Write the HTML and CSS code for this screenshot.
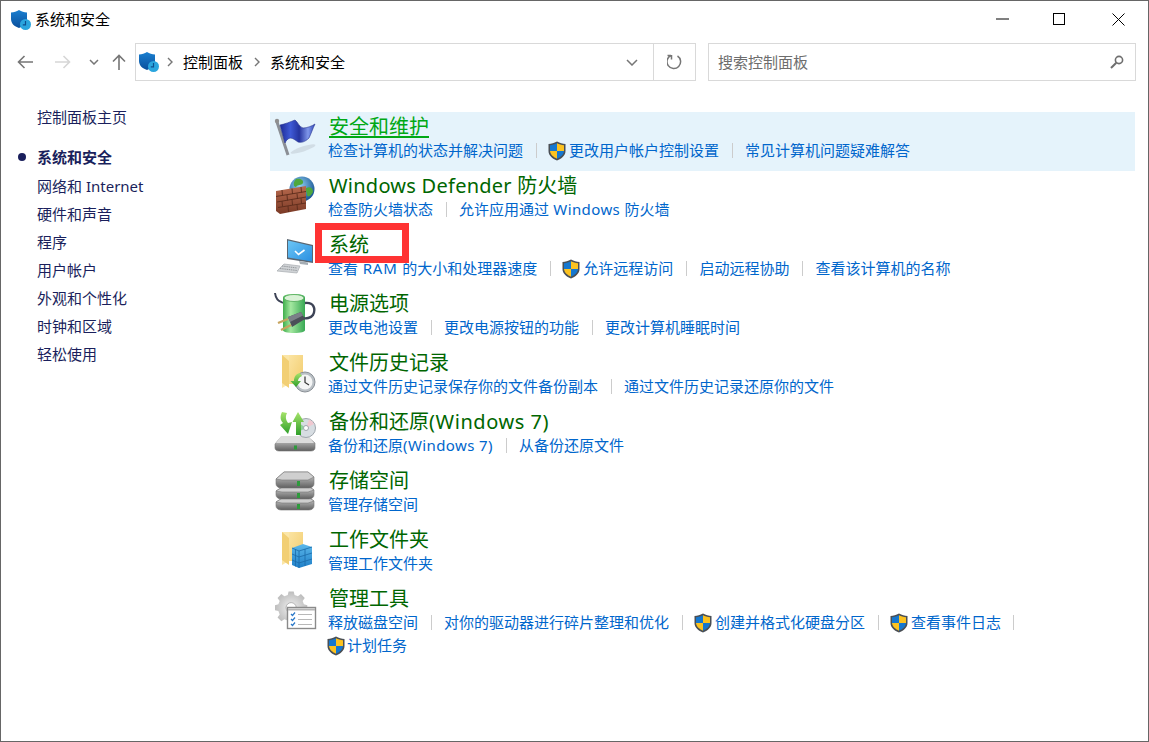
FILE: index.html
```html
<!DOCTYPE html>
<html lang="zh-CN">
<head>
<meta charset="utf-8">
<title>系统和安全</title>
<link rel="stylesheet" href="styles.css">
</head>
<body>
<svg class="defs" width="0" height="0" aria-hidden="true">
  <defs>
    <linearGradient id="gShieldBlue" x1="0" y1="0" x2="0" y2="1"><stop offset="0" stop-color="#1a7fd0"/><stop offset="1" stop-color="#0a4f9c"/></linearGradient>
    <linearGradient id="gFlag" x1="0" y1="0" x2="1" y2="0"><stop offset="0" stop-color="#1c2a96"/><stop offset=".3" stop-color="#3f5ad6"/><stop offset=".55" stop-color="#25349f"/><stop offset=".8" stop-color="#7f97ea"/><stop offset="1" stop-color="#3048b8"/></linearGradient>
    <linearGradient id="gBrick" x1="0" y1="0" x2="0" y2="1"><stop offset="0" stop-color="#b96a4e"/><stop offset="1" stop-color="#7a3a26"/></linearGradient>
    <radialGradient id="gGlobe" cx=".4" cy=".35" r=".7"><stop offset="0" stop-color="#8fd0f5"/><stop offset="1" stop-color="#14508f"/></radialGradient>
    <linearGradient id="gScreen" x1="0" y1="0" x2="1" y2="1"><stop offset="0" stop-color="#6cc6f6"/><stop offset="1" stop-color="#2a8fe0"/></linearGradient>
    <linearGradient id="gBatt" x1="0" y1="0" x2="1" y2="0"><stop offset="0" stop-color="#3fae4c"/><stop offset=".35" stop-color="#a4e8a0"/><stop offset="1" stop-color="#38a854"/></linearGradient>
    <linearGradient id="gFolder" x1="0" y1="0" x2="1" y2="1"><stop offset="0" stop-color="#fbe4a2"/><stop offset="1" stop-color="#f2cc6e"/></linearGradient>
    <linearGradient id="gDrive" x1="0" y1="0" x2="0" y2="1"><stop offset="0" stop-color="#d8d8d8"/><stop offset="1" stop-color="#5f5f5f"/></linearGradient>
    <linearGradient id="gArrow" x1="0" y1="0" x2="0" y2="1"><stop offset="0" stop-color="#a6e36a"/><stop offset="1" stop-color="#2f9f2a"/></linearGradient>
    <linearGradient id="gCube" x1="0" y1="0" x2="0" y2="1"><stop offset="0" stop-color="#5cb8ea"/><stop offset="1" stop-color="#1f7fc8"/></linearGradient>
    <radialGradient id="gGear" cx=".5" cy=".5" r=".6"><stop offset="0" stop-color="#f0f0f0"/><stop offset="1" stop-color="#b4b4b4"/></radialGradient>
    <symbol id="uac" viewBox="0 0 18 20">
      <path d="M9 .5 C12 2 14.5 2.8 17.5 3 V10 C17.5 14.5 13.5 17.8 9 19.5 C4.500 17.800 .5 14.500 .5 10 V3 C3.500 2.800 6 2 9 .5Z" fill="#4a4f55"/>
      <path d="M9 2.200 V10 H2 V4.300 C4.600 4 6.800 3.300 9 2.200Z" fill="#1577cf"/>
      <path d="M9 2.200 C11.200 3.300 13.400 4 16 4.300 V10 H9Z" fill="#fcc21f"/>
      <path d="M2 10 H9 V17.700 C5.600 16.200 2.300 13.800 2 10Z" fill="#fcc21f"/>
      <path d="M9 10 H16 C15.700 13.800 12.400 16.200 9 17.700Z" fill="#1577cf"/>
    </symbol>
    <symbol id="sec" viewBox="0 0 20 20">
      <path d="M8 0 C10.500 1.600 13 2.400 16 2.600 V9 C16 13.500 12.500 16.500 8 18 C3.500 16.500 0 13.500 0 9 V2.600 C3 2.400 5.500 1.600 8 0Z" fill="url(#gShieldBlue)"/>
      <circle cx="14.500" cy="14.500" r="5.500" fill="#2aa5de"/>
      <path d="M14.500 11 V14.800 H11.800" fill="none" stroke="#0d4f8f" stroke-width="1.200"/>
    </symbol>
  </defs>
</svg>
<div class="window">
  <header class="titlebar">
    <svg class="title-icon"><use href="#sec"/></svg>
    <span class="title-text">系统和安全</span>
    <div class="caption">
      <svg class="cap-btn" viewBox="0 0 13 13"><path d="M0 6H13" stroke="#000" fill="none"/></svg>
      <svg class="cap-btn cap-max" viewBox="0 0 13 13"><rect x=".5" y=".5" width="11" height="11" stroke="#000" fill="none"/></svg>
      <svg class="cap-btn" viewBox="0 0 13 13"><path d="M.5 .5 12.500 12.500M12.500 .5 .5 12.500" stroke="#000" fill="none"/></svg>
    </div>
  </header>
  <div class="toolbar">
    <nav class="navs">
      <svg class="nav nav-back" viewBox="0 0 16 14"><path d="M16 7H1.500M7.500 1 1.500 7l6 6" fill="none" stroke="#767676" stroke-width="1.600"/></svg>
      <svg class="nav nav-fwd" viewBox="0 0 16 14"><path d="M0 7H14.500M8.500 1l6 6-6 6" fill="none" stroke="#d6d6d6" stroke-width="1.600"/></svg>
      <svg class="nav nav-drop" viewBox="0 0 10 6"><path d="M1 1l4 4 4-4" fill="none" stroke="#767676" stroke-width="1.500"/></svg>
      <svg class="nav nav-up" viewBox="0 0 14 16"><path d="M7 16V1.500M1 7.500l6-6 6 6" fill="none" stroke="#767676" stroke-width="1.600"/></svg>
    </nav>
    <div class="address">
      <svg class="addr-icon"><use href="#sec"/></svg>
      <svg class="crumb-sep" viewBox="0 0 6 10"><path d="M1 1l4 4-4 4" fill="none" stroke="#767676" stroke-width="1.400"/></svg>
      <span class="crumb">控制面板</span>
      <svg class="crumb-sep" viewBox="0 0 6 10"><path d="M1 1l4 4-4 4" fill="none" stroke="#767676" stroke-width="1.400"/></svg>
      <span class="crumb">系统和安全</span>
      <svg class="addr-drop" viewBox="0 0 12 7"><path d="M1 1l5 5 5-5" fill="none" stroke="#767676" stroke-width="1.500"/></svg>
      <div class="addr-refresh">
        <svg class="refresh" viewBox="0 0 16 16"><path d="M4 1.500 A6.800 6.800 0 1 0 10.500 2 M4.500 1 V5.500 M4 1.500 H0.500" fill="none" stroke="#767676" stroke-width="1.500"/></svg>
      </div>
    </div>
    <div class="search">
      <span class="search-text">搜索控制面板</span>
      <svg class="search-icon" viewBox="0 0 14 14"><circle cx="9" cy="5" r="3.600" fill="none" stroke="#6e6e6e" stroke-width="1.600"/><path d="M6.300 7.700 1 13" stroke="#6e6e6e" stroke-width="2"/></svg>
    </div>
  </div>
  <div class="main">
    <aside class="side">
      <a class="side-home">控制面板主页</a>
      <ul class="side-list">
        <li class="side-item is-current">系统和安全</li>
        <li class="side-item">网络和 Internet</li>
        <li class="side-item">硬件和声音</li>
        <li class="side-item">程序</li>
        <li class="side-item">用户帐户</li>
        <li class="side-item">外观和个性化</li>
        <li class="side-item">时钟和区域</li>
        <li class="side-item">轻松使用</li>
      </ul>
    </aside>
    <section class="content">
      <article class="row is-hover">
        <svg class="row-icon" viewBox="0 0 48 48">
          <ellipse cx="31" cy="35" rx="13" ry="2.500" fill="#c9d3dc" opacity=".7" transform="rotate(-18 31 35)"/>
          <path d="M5 8 16 41" stroke="#8b8f95" stroke-width="3"/>
          <circle cx="5" cy="7" r="2.200" fill="#8f8f8f"/>
          <path d="M8 11 C13 10 18 8 23 6 C26 8 27 13 31 14 C35 14 40 12 43 10 C41 14 39 20 37 24 C33 28 29 29 26 28 C23 26 21 24 18 24 C15 25 14 27 13 29Z" fill="url(#gFlag)" stroke="#26338f" stroke-width=".6"/>
        </svg>
        <div class="row-body">
          <h2 class="row-title title-hover">安全和维护</h2>
          <div class="links">
            <a class="link">检查计算机的状态并解决问题</a>
            <a class="link sep has-uac"><svg class="uac"><use href="#uac"/></svg>更改用户帐户控制设置</a>
            <a class="link sep">常见计算机问题疑难解答</a>
          </div>
        </div>
      </article>
      <article class="row">
        <svg class="row-icon" viewBox="0 0 48 48">
          <circle cx="30" cy="16" r="12.500" fill="url(#gGlobe)"/>
          <path d="M24 6 C28 5 32 7 31 10 C29 13 26 11 24 14 C21 14 21 9 24 6Z M34 15 C38 13 41 15 41 19 C39 23 36 25 35 22 C35 19 33 18 34 15Z" fill="#4fa83c"/>
          <path d="M4 18 34 13 34 36 8 41 4 38Z" fill="url(#gBrick)"/>
          <path d="M4 23.500 34 18.500M5 29 34 24M6 34.500 34 30M10 17 10.500 22.500M20 15.500 20.500 21M29 14 29.500 19.500M15 22 15.500 27.500M25 20.500 25.500 26M10 28 10.500 33.500M20 26.500 20.500 32M29 25 29.500 30.500M16 33 16.500 39M25 31.500 25.500 37" stroke="#5b2b1b" stroke-width=".9" fill="none"/>
        </svg>
        <div class="row-body">
          <h2 class="row-title"><span class="lat-title">Windows Defender </span>防火墙</h2>
          <div class="links">
            <a class="link">检查防火墙状态</a>
            <a class="link sep">允许应用通过<span class="lat"> Windows </span>防火墙</a>
          </div>
        </div>
      </article>
      <article class="row">
        <svg class="row-icon" viewBox="0 0 48 48">
          <path d="M15 7 41 13V31L15 27Z" fill="#5a6570"/>
          <path d="M16 8.500 40 14V29.500L16 25.500Z" fill="url(#gScreen)"/>
          <path d="M23 19l3.500 3.500 6-4.500" fill="none" stroke="#fff" stroke-width="1.600"/>
          <path d="M27 29 36 30.500V33L28 32Z" fill="#a5adb4"/>
          <path d="M12 32 28 34 25 41 5 39Z" fill="#d0d3d6" stroke="#a8acb0" stroke-width=".7"/>
          <path d="M10 34 25 36M8 36.500 25 38.500" stroke="#8f9397" stroke-width=".9" stroke-dasharray="1.500 .7"/>
        </svg>
        <div class="row-body">
          <h2 class="row-title">系统</h2>
          <div class="links">
            <a class="link">查看<span class="lat-wide"> RAM </span>的大小和处理器速度</a>
            <a class="link sep has-uac"><svg class="uac"><use href="#uac"/></svg>允许远程访问</a>
            <a class="link sep">启动远程协助</a>
            <a class="link sep">查看该计算机的名称</a>
          </div>
        </div>
      </article>
      <article class="row">
        <svg class="row-icon" viewBox="0 0 48 48">
          <path d="M3 2 C4 10 8 10 11 12" fill="none" stroke="#3d4356" stroke-width="2"/>
          <path d="M11 7 C11 4 15 3 22 3 C29 3 33 4 33 7 V39 C33 41 29 42 22 42 C15 42 11 41 11 39Z" fill="url(#gBatt)"/>
          <ellipse cx="22" cy="7" rx="10" ry="3.500" fill="#d9f2d6" stroke="#4faa55" stroke-width=".8"/>
          <path d="M33 12 C42 11 44 18 41 24 C39 27 34 28 30 27" fill="none" stroke="#3d4356" stroke-width="2.400"/>
          <path d="M16 26 29 21 33 28 20 36Z" fill="#4b5058"/>
          <path d="M16 26 29 21 31 24.500 18 31Z" fill="#7b8088"/>
          <path d="M16 28 6 32M19 34 9 39" stroke="#c7a45e" stroke-width="2.400"/>
        </svg>
        <div class="row-body">
          <h2 class="row-title">电源选项</h2>
          <div class="links">
            <a class="link">更改电池设置</a>
            <a class="link sep">更改电源按钮的功能</a>
            <a class="link sep">更改计算机睡眠时间</a>
          </div>
        </div>
      </article>
      <article class="row">
        <svg class="row-icon" viewBox="0 0 48 48">
          <path d="M10 5H31V34H17L10 38Z" fill="#fbe6a8"/>
          <path d="M17 5H31V34H17Z" fill="url(#gFolder)"/>
          <path d="M10 5 17 11V38L10 33Z" fill="#f2cf74"/>
          <circle cx="33" cy="32" r="10" fill="#b9bfc4" stroke="#8a9096"/>
          <circle cx="33" cy="32" r="7.500" fill="#f4f5f5"/>
          <path d="M33 26.500V32.500L37 35" fill="none" stroke="#333" stroke-width="1.200"/>
          <path d="M28 23 C23 24 22 28 22 31 H18.500 L24 37 L29 31 H26 C26 29 27 27 30 26Z" fill="url(#gArrow)"/>
        </svg>
        <div class="row-body">
          <h2 class="row-title">文件历史记录</h2>
          <div class="links">
            <a class="link">通过文件历史记录保存你的文件备份副本</a>
            <a class="link sep">通过文件历史记录还原你的文件</a>
          </div>
        </div>
      </article>
      <article class="row">
        <svg class="row-icon" viewBox="0 0 48 48">
          <path d="M9 28 H36 L43 34 V39 C43 41 41 42 39 42 H7 C5 42 3 41 3 39 V35Z" fill="url(#gDrive)" stroke="#777" stroke-width=".6"/>
          <path d="M9 27 H36 L42 34 H4Z" fill="#dcdcdc"/>
          <rect x="22" y="36.500" width="3" height="4" fill="#2e9a3c"/>
          <circle cx="34" cy="19" r="9.500" fill="#d7dde2" stroke="#9ea5ac"/>
          <path d="M34 19 L27 14 A9 9 0 0 0 26 23Z" fill="#8fd09a"/>
          <path d="M34 19 L42 15 A9 9 0 0 0 37 10.500Z" fill="#f0c8d0"/>
          <circle cx="34" cy="19" r="2.500" fill="#fff" stroke="#9ea5ac"/>
          <path d="M10 3 C8 7 8 11 11 14 L8 16 L16 25 L20 13 L16 14 C14 11 13 8 15 4Z" fill="url(#gArrow)"/>
          <path d="M24 26 V13 H20.500 L26 3 L32 13 H29 V26Z" fill="url(#gArrow)"/>
        </svg>
        <div class="row-body">
          <h2 class="row-title">备份和还原<span class="lat-title-wide">(Windows 7)</span></h2>
          <div class="links">
            <a class="link">备份和还原<span class="lat">(Windows 7)</span></a>
            <a class="link sep">从备份还原文件</a>
          </div>
        </div>
      </article>
      <article class="row">
        <svg class="row-icon" viewBox="0 0 48 48">
          <g stroke="#777" stroke-width=".6"><path d="M4 34 12 29H36L42 33V38C42 40 40 42 37 42H9C6 42 4 40 4 38Z" fill="url(#gDrive)"/><path d="M4 34 12 29H36L42 33 36 35H10Z" fill="#cfcfcf"/></g><rect x="25" y="36" width="3" height="5" fill="#2e9a3c"/>
          <g stroke="#777" stroke-width=".6"><path d="M4 23 12 18H36L42 22V27C42 29 40 31 37 31H9C6 31 4 29 4 27Z" fill="url(#gDrive)"/><path d="M4 23 12 18H36L42 22 36 24H10Z" fill="#cfcfcf"/></g><rect x="25" y="25" width="3" height="5" fill="#2e9a3c"/>
          <g stroke="#777" stroke-width=".6"><path d="M4 11 12 4H36L42 9V16C42 18 40 20 37 20H9C6 20 4 18 4 16Z" fill="url(#gDrive)"/><path d="M4 11 12 4H36L42 9 36 12H10Z" fill="#cfcfcf"/></g><rect x="25" y="13" width="3" height="5" fill="#2e9a3c"/>
        </svg>
        <div class="row-body">
          <h2 class="row-title">存储空间</h2>
          <div class="links">
            <a class="link">管理存储空间</a>
          </div>
        </div>
      </article>
      <article class="row">
        <svg class="row-icon" viewBox="0 0 48 48">
          <path d="M10 5H31V34H17L10 38Z" fill="#fbe6a8"/>
          <path d="M17 5H31V34H17Z" fill="url(#gFolder)"/>
          <path d="M10 5 17 11V38L10 33Z" fill="#f2cf74"/>
          <path d="M20 21 31 17 40 20V37L27 41 20 38Z" fill="url(#gCube)"/>
          <path d="M27 24V41M20 21 27 24 40 20M20 27 27 30 40 26M20 33 27 36 40 32M33 22V39M23.500 22.500V39.500" fill="none" stroke="#1a6aa8" stroke-width=".8"/>
        </svg>
        <div class="row-body">
          <h2 class="row-title">工作文件夹</h2>
          <div class="links">
            <a class="link">管理工作文件夹</a>
          </div>
        </div>
      </article>
      <article class="row">
        <svg class="row-icon" viewBox="0 0 48 48">
          <g transform="translate(3 3) scale(.85)">
            <path d="M16 3h6l1 4 4 1.500 3.500-2.500 4.500 4.500-2.500 3.500 1.500 4 4 1v6l-4 1-1.500 4 2.500 3.500-4.500 4.500-3.500-2.500-4 1.500-1 4h-6l-1-4-4-1.500-3.500 2.500-4.500-4.500 2.500-3.500-1.500-4-4-1v-6l4-1 1.500-4-2.500-3.500 4.500-4.500 3.500 2.500 4-1.500Z" fill="url(#gGear)"/>
            <circle cx="19" cy="22" r="6" fill="#fff" stroke="#a6a6a6"/>
          </g>
          <rect x="15.500" y="21.500" width="28" height="21" fill="#fff" stroke="#8a8a8a" stroke-width="1.400"/>
          <path d="M16 23.500H43" stroke="#b5b5b5" stroke-width="2"/>
          <path d="M19 28l1.500 1.500 2.500-3M19 33l1.500 1.500 2.500-3M19 38l1.500 1.500 2.500-3" fill="none" stroke="#2a78c8" stroke-width="1.200"/>
          <path d="M26 28.500H40M26 33.500H40M26 38.500H40" stroke="#b8b8b8"/>
        </svg>
        <div class="row-body">
          <h2 class="row-title">管理工具</h2>
          <div class="links links-narrow">
            <a class="link">释放磁盘空间</a>
            <a class="link sep">对你的驱动器进行碎片整理和优化</a>
            <a class="link sep has-uac"><svg class="uac"><use href="#uac"/></svg>创建并格式化硬盘分区</a>
            <a class="link sep has-uac sep-after"><svg class="uac"><use href="#uac"/></svg>查看事件日志</a>
            <a class="link link-wrapped"><svg class="uac"><use href="#uac"/></svg>计划任务</a>
          </div>
        </div>
      </article>
      <div class="redbox"></div>
    </section>
  </div>
</div>
</body>
</html>
```

FILE: styles.css
```css
* { box-sizing: border-box; }
html, body { margin: 0; padding: 0; }
body {
  width: 1149px;
  height: 742px;
  overflow: hidden;
  background: #fff;
  font-family: "Noto Sans", "Noto Sans CJK SC", sans-serif;
  font-size: 15px;
  color: #000;
}
.defs { display: block; width: 0; height: 0; }
.window {
  width: 1149px;
  height: 742px;
  border: 1px solid #666;
  background: #fff;
  display: flex;
  flex-direction: column;
}
.titlebar {
  display: flex;
  align-items: center;
  height: 38px;
  flex: none;
  padding-left: 10px;
}
.title-icon { width: 20px; height: 20px; flex: none; }
.title-text { margin: -2px 0 0 4px; font-size: 15px; line-height: 20px; }
.caption { margin-left: auto; display: flex; align-items: center; column-gap: 45px; margin-top: -2px; margin-right: 23px; }
.cap-btn { width: 13px; height: 13px; display: block; flex: none; }
.cap-max { margin-left: -1px; margin-right: 1px; }
.toolbar {
  display: flex;
  align-items: center;
  height: 38px;
  margin-top: 4px;
  flex: none;
}
.navs { width: 134px; flex: none; display: flex; align-items: center; padding-left: 16px; }
.nav { display: block; flex: none; }
.nav-back { width: 16px; height: 14px; }
.nav-fwd { width: 16px; height: 14px; margin-left: 22px; }
.nav-drop { width: 10px; height: 6px; margin-left: 18px; }
.nav-up { width: 14px; height: 16px; margin-left: 13px; }
.address {
  width: 561px;
  height: 38px;
  flex: none;
  border: 1px solid #d9d9d9;
  display: flex;
  align-items: center;
  padding-left: 3px;
}
.addr-icon { width: 20px; height: 20px; flex: none; margin-right: 8px; }
.crumb-sep { width: 6px; height: 10px; flex: none; }
.crumb { margin: 0 11px 0 10px; line-height: 20px; }
.addr-drop { width: 12px; height: 7px; margin-left: auto; margin-right: 15px; flex: none; }
.addr-refresh {
  width: 42px;
  height: 100%;
  border-left: 1px solid #d9d9d9;
  display: flex;
  align-items: center;
  justify-content: center;
  flex: none;
}
.refresh { width: 16px; height: 16px; }
.search {
  margin-left: 12px;
  width: 428px;
  height: 38px;
  flex: none;
  border: 1px solid #d9d9d9;
  display: flex;
  align-items: center;
  padding: 0 11px 0 9px;
}
.search-text { color: #6d6d6d; line-height: 20px; }
.search-icon { width: 14px; height: 14px; margin-left: auto; }
.main { display: flex; flex: 1; min-height: 0; }
.side { width: 269px; flex: none; padding: 24px 0 0 36px; color: #1a1f5c; }
.side-home { display: block; line-height: 24px; height: 24px; }
.side-list { list-style: none; margin: 14px 0 0; padding: 0; }
.side-item { height: 28px; line-height: 28px; }
.side-item.is-current { font-weight: 700; position: relative; height: 29px; line-height: 28px; }
.is-current::before {
  content: "";
  position: absolute;
  left: -19px;
  top: 10px;
  width: 8px;
  height: 8px;
  border-radius: 50%;
  background: #1a1f5c;
}
.content { position: relative; width: 865px; flex: none; padding-top: 31px; }
.row {
  display: flex;
  height: 59px;
  padding-left: 2px;
  column-gap: 8px;
}
.row.is-hover { background: #e5f3fb; }
.row-icon { width: 48px; height: 48px; margin-top: 2px; flex: none; display: block; }
.row-body { flex: 1; min-width: 0; }
.row-title {
  margin: 0 0 -1px;
  padding: 1px 0 0 1px;
  font-size: 20px;
  font-weight: 400;
  line-height: 27px;
  color: #006600;
}
.row-title.title-hover { color: #00a815; text-decoration: underline; text-underline-offset: 2px; display: inline-block; vertical-align: top; }
.lat-title { letter-spacing: .25px; }
.lat-title-wide { letter-spacing: .55px; }
.lat { letter-spacing: .4px; }
.lat-wide { letter-spacing: .8px; }
.links { display: flex; flex-wrap: wrap; line-height: 23px; }
.links-narrow { max-width: 750px; }
.link {
  display: inline-flex;
  align-items: center;
  height: 23px;
  color: #0066cc;
  white-space: pre;
}
.link-wrapped { margin-left: -1px; }
.link-wrapped .uac { margin-right: 2px; }
.link.sep { margin-left: 26px; position: relative; }
.link.sep::before {
  content: "";
  position: absolute;
  left: -13px;
  top: 4px;
  height: 15px;
  border-left: 1px solid #ccc;
}
.link.has-uac { margin-left: 25px; }
.link.has-uac::before { left: -12px; }
.sep-after { margin-right: 13px; }
.sep-after::after {
  content: "";
  position: absolute;
  right: -13px;
  top: 4px;
  height: 15px;
  border-left: 1px solid #ccc;
}
.uac { width: 18px; height: 20px; margin-right: 3px; flex: none; }
.redbox {
  position: absolute;
  left: 45px;
  top: 142px;
  width: 94px;
  height: 40px;
  border: 7px solid #ff3333;
  pointer-events: none;
}
```
